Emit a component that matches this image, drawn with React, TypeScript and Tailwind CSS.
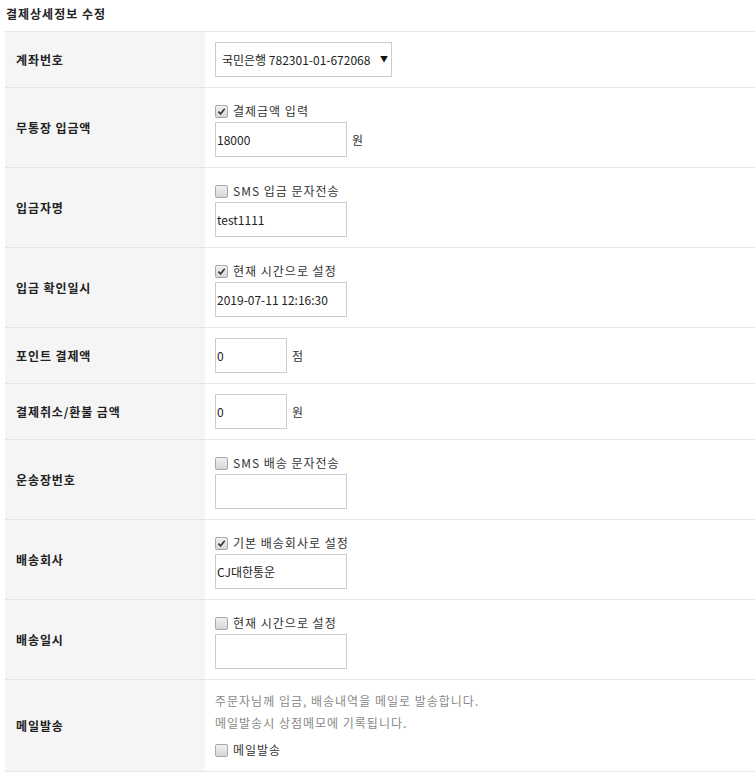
import React from "react";

const font = { fontFamily: '"Noto Sans CJK KR", "Noto Sans", sans-serif' };

function Check({ checked, label }: { checked?: boolean; label: string }) {
  return (
    <label className="flex h-[22px] items-center gap-[5px] text-[12px] tracking-[1px] text-[#333]">
      <span className="flex h-[13px] w-[13px] items-center justify-center rounded-[2px] border border-[#a9a9a9] bg-gradient-to-b from-[#f2f2f2] to-[#d6d6d6]">
        {checked && (
          <svg viewBox="0 0 10 10" className="h-[9px] w-[9px]">
            <path d="M1.5 5.2 L4 7.6 L8.6 2" fill="none" stroke="#333" strokeWidth="1.8" />
          </svg>
        )}
      </span>
      {label}
    </label>
  );
}

function Field({ value, w = "w-[132px]", unit }: { value?: string; w?: string; unit?: string }) {
  return (
    <div className="flex items-center">
      <input
        readOnly
        value={value ?? ""}
        className={`${w} h-[35px] border border-[#ccc] bg-white px-[1px] text-[12px] text-[#222] outline-none`}
      />
      {unit && <span className="ml-[5px] text-[12px] text-[#333]">{unit}</span>}
    </div>
  );
}

function Row({ label, children, tall }: { label: string; children: React.ReactNode; tall?: boolean }) {
  return (
    <div className="flex border-b border-[#e5e5e5]">
      <div className="flex w-[200px] shrink-0 items-center bg-[#f5f5f5] pl-[11px] text-[12px] font-bold tracking-[0.9px] text-[#222]">
        {label}
      </div>
      <div className={`flex flex-col pl-[10px] ${tall ? "pt-[12px] pb-[10px]" : "py-[10px]"}`}>{children}</div>
    </div>
  );
}

export default function App() {
  return (
    <div className="min-h-[772px] bg-white pl-[5px]" style={font}>
      <div className="flex h-[31px] items-center pl-[1px] pb-[3px] text-[12px] font-bold tracking-[1px] text-[#222]">
        결제상세정보 수정
      </div>
      <div className="border-t border-[#e5e5e5]">
        <Row label="계좌번호">
          <div className="relative w-[177px]">
            <select className="h-[35px] w-[177px] appearance-none border border-[#ccc] bg-white pl-[6px] text-[12px] text-[#222] outline-none">
              <option>국민은행 782301-01-672068</option>
            </select>
            <span className="pointer-events-none absolute right-[4px] top-[11px] text-[8px] text-[#111]">▼</span>
          </div>
        </Row>
        <Row label="무통장 입금액" tall>
          <Check checked label="결제금액 입력" />
          <Field value="18000" unit="원" />
        </Row>
        <Row label="입금자명" tall>
          <Check label="SMS 입금 문자전송" />
          <Field value="test1111" />
        </Row>
        <Row label="입금 확인일시" tall>
          <Check checked label="현재 시간으로 설정" />
          <Field value="2019-07-11 12:16:30" />
        </Row>
        <Row label="포인트 결제액">
          <Field value="0" w="w-[72px]" unit="점" />
        </Row>
        <Row label="결제취소/환불 금액">
          <Field value="0" w="w-[72px]" unit="원" />
        </Row>
        <Row label="운송장번호" tall>
          <Check label="SMS 배송 문자전송" />
          <Field />
        </Row>
        <Row label="배송회사" tall>
          <Check checked label="기본 배송회사로 설정" />
          <Field value="CJ대한통운" />
        </Row>
        <Row label="배송일시" tall>
          <Check label="현재 시간으로 설정" />
          <Field />
        </Row>
        <Row label="메일발송">
          <div className="text-[12px] leading-[22px] tracking-[1px] text-[#888]">
            <p>주문자님께 입금, 배송내역을 메일로 발송합니다.</p>
            <p>메일발송시 상점메모에 기록됩니다.</p>
          </div>
          <div className="pt-[5px]">
            <Check label="메일발송" />
          </div>
        </Row>
      </div>
    </div>
  );
}
